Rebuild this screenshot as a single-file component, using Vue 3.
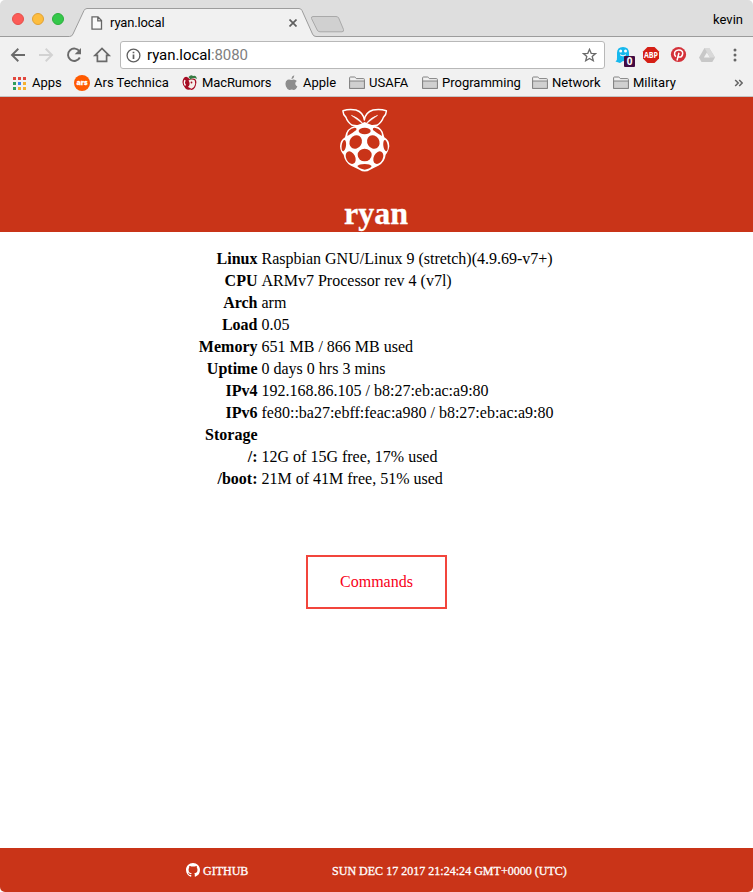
<script setup>
const stats = [
  { label: 'Linux', value: 'Raspbian GNU/Linux 9 (stretch)(4.9.69-v7+)' },
  { label: 'CPU', value: 'ARMv7 Processor rev 4 (v7l)' },
  { label: 'Arch', value: 'arm' },
  { label: 'Load', value: '0.05' },
  { label: 'Memory', value: '651 MB / 866 MB used' },
  { label: 'Uptime', value: '0 days 0 hrs 3 mins' },
  { label: 'IPv4', value: '192.168.86.105 / b8:27:eb:ac:a9:80' },
  { label: 'IPv6', value: 'fe80::ba27:ebff:feac:a980 / b8:27:eb:ac:a9:80' },
  { label: 'Storage', value: '' },
  { label: '/:', value: '12G of 15G free, 17% used' },
  { label: '/boot:', value: '21M of 41M free, 51% used' },
]
const folders = ['USAFA', 'Programming', 'Network', 'Military']
const appColors = ['#e2483d', '#e2483d', '#e2483d', '#2f9e5b', '#3b84ee', '#f5b02e', '#2f9e5b', '#f5b02e', '#f5b02e']
</script>

<template>
  <div class="window">
    <div class="titlebar">
      <svg class="tabs" width="753" height="37" viewBox="0 0 753 37">
        <path d="M0 36.5H69.5Q72 36.5 73 34L84 10.5Q85 8.5 87 8.5H299Q301 8.5 302 10.5L312.500 34Q313.500 36.500 316 36.500H753V38H0Z" fill="#f1f1f1" stroke="#9c9c9c" />
        <path d="M313 16.500H336Q338 16.500 338.700 18L343.500 29.500Q344 31.800 342 31.800H320Q318 31.800 317.200 30L311.500 18.500Q311 16.500 313 16.500Z" fill="#d0d0d0" stroke="#a9a9a9" />
      </svg>
      <div class="lights"><i class="close"></i><i class="min"></i><i class="max"></i></div>
      <svg class="page" width="12" height="14" viewBox="0 0 12 14"><path d="M1 .8H7L10.500 4.500V13.200H1Z M6.800 1V4.800H10.500" fill="#fafafa" stroke="#666" stroke-width="1.300" /></svg>
      <span class="tab-title">ryan.local</span>
      <svg class="x" width="8" height="8" viewBox="0 0 8 8"><path d="M.5.5L7.500 7.500M7.500.5L.5 7.500" stroke="#5f5f5f" stroke-width="1.700" /></svg>
      <span class="profile">kevin</span>
    </div>

    <div class="toolbar">
      <svg class="nav" width="112" height="36" viewBox="0 0 112 36" fill="none" stroke="#6a6a6a" stroke-width="1.900">
        <path d="M25 18H12.500M18.300 11.800L12 18L18.300 24.200" />
        <path d="M39 18H51.500M45.700 11.800L52 18L45.700 24.200" stroke="#d2d2d2" />
        <path d="M79.500 14.500A6.200 6.200 0 1 0 79.800 20.500" />
        <path d="M81 11V17.300H74.700Z" fill="#6a6a6a" stroke="none" />
        <path d="M95 18.300L102 11.500L109 18.300H106.600V24.300H97.400V18.300Z" stroke-width="1.700" />
      </svg>
      <div class="address">
        <svg class="info" width="15" height="15" viewBox="0 0 15 15"><circle cx="7.500" cy="7.500" r="6.400" fill="none" stroke="#5f5f5f" stroke-width="1.300" /><path d="M7.500 6.500V11M7.500 3.700V5.300" stroke="#5f5f5f" stroke-width="1.700" /></svg>
        <span class="url">ryan.local<em>:8080</em></span>
        <svg class="star" width="15" height="14" viewBox="0 0 15 14"><path d="M7.500 1.300L9.200 5.300L13.500 5.600L10.200 8.400L11.300 12.700L7.500 10.400L3.700 12.700L4.800 8.400L1.500 5.600L5.800 5.300Z" fill="none" stroke="#696969" stroke-width="1.300" /></svg>
      </div>
      <svg class="extensions" width="148" height="36" viewBox="605 37 148 36">
        <path d="M617 53Q617 47 623 47Q629 47 629 53V61L626 62L623 61L620 63L615.500 61.500Q617.500 60 617 57Z" fill="#15b8ee" />
        <circle cx="620.700" cy="51" r="1.500" fill="#fff" /><circle cx="625.500" cy="51" r="1.500" fill="#fff" />
        <path d="M620 54.800Q623 57 626 54.800" fill="none" stroke="#fff" />
        <rect x="624" y="56" width="11" height="11" rx="1" fill="#420b43" /><text x="629.500" y="65.300" class="badge" text-anchor="middle">0</text>
        <path d="M647.500 47H654.500L659 51.500V58.500L654.500 63H647.500L643 58.500V51.500Z" fill="#d51f15" />
        <text x="651" y="58" class="abp" text-anchor="middle" textLength="14" lengthAdjust="spacingAndGlyphs">ABP</text>
        <circle cx="678.500" cy="54.500" r="7.600" fill="#d4323a" />
        <path d="M675.800 56.700Q673.900 54.700 674.700 52.300Q675.900 49.800 679.100 50Q682.600 50.200 682.700 53.300Q682.300 57 679.700 57.100Q678.300 57 678.300 55.900M679 52.800L677 60.500" fill="none" stroke="#fff" stroke-width="1.500" />
        <path d="M704.500 48H709.200L715 57.500L712.300 62H701.500L699 57.500Z" fill="#c8c8c8" /><path d="M706.900 52.500L703.800 57.500H710Z" fill="#f1f1f1" /><path d="M709.200 48L715 57.500H710L704.500 48Z" fill="#d9d9d9" />
        <g fill="#666"><circle cx="735" cy="50" r="1.500" /><circle cx="735" cy="55" r="1.500" /><circle cx="735" cy="60" r="1.500" /></g>
      </svg>
    </div>

    <div class="bookmarks">
      <div class="bookmark">
        <span class="apps"><i v-for="(c, i) in appColors" :key="i" :style="{ background: c }"></i></span>
        <span>Apps</span>
      </div>
      <div class="bookmark"><svg width="16" height="16" viewBox="0 0 16 16"><circle cx="8" cy="8" r="8" fill="#ff5a00" /><text x="8" y="10.300" class="ars" text-anchor="middle" textLength="11" lengthAdjust="spacingAndGlyphs">ars</text></svg><span>Ars Technica</span></div>
      <div class="bookmark">
        <svg width="16" height="16" viewBox="0 0 16 16"><path d="M8 4.500Q4-.5 1.200 4Q-1 9 3.500 13.500Q5.500 15.500 8 14.500Q11 16 13 12.500Q15.500 7 13.500 4.500Q11 2.500 8 4.500Z" fill="#a70d24" /><path d="M6.500 5.500Q10 3.500 12.800 5.500Q14 9 12 12L9.500 13.800L6 12Q9 9 6.500 5.500Z" fill="#f5eee9" /><path d="M3 5Q1.500 8 3.500 10.500" fill="none" stroke="#fff" stroke-width="1.300" /><path d="M6.500 2Q9-1 11 1Q14-.5 15 4Q11.500 2 8.500 4.500Z" fill="#367b43" /><circle cx="9.500" cy="7.500" r=".9" fill="#a70d24" /></svg>
        <span class="mac">MacRumors</span>
      </div>
      <div class="bookmark apple">
        <svg width="13" height="16" viewBox="0 0 13 16" fill="#8d8d8d"><path d="M9.200 .3Q9.400 3.200 6.600 4.200Q6.100 1.500 9.200 .3ZM6.600 5Q9.500 3.600 11.900 6Q9.400 7.500 10.700 10Q11.100 10.900 12.400 11.400Q10.700 15.200 8.800 14.900Q6.800 13.900 4.600 14.900Q2.600 15.200 1 11.500Q-.6 6.200 2.600 4.700Q4.300 4.100 6.600 5Z" /></svg>
        <span>Apple</span>
      </div>
      <div v-for="name in folders" :key="name" class="bookmark">
        <svg width="16" height="14" viewBox="0 0 16 14"><path d="M.6 12.400V1.800Q.6 1 1.400 1H5.500Q6.300 1 6.700 1.800L7.300 2.600H14.500Q15.400 2.600 15.400 3.500V12.400Z" fill="#f1f1f1" stroke="#828282" /><path d="M.6 5H15.400V12.400H.6Z" fill="#d0d0d0" stroke="#828282" /></svg>
        <span>{{ name }}</span>
      </div>
      <svg class="more" width="9" height="8" viewBox="0 0 9 8"><path d="M1.200 1L4.200 4L1.200 7M5.200 1L8.200 4L5.200 7" fill="none" stroke="#666" stroke-width="1.600" /></svg>
    </div>

    <header>
      <svg class="logo" width="52" height="66" viewBox="59 34 156 198">
        <g fill="#c93418" stroke="#fff" stroke-width="4.500" stroke-linejoin="round">
          <path d="M135 83Q118 90 99 86Q84 76 80 62Q70 53 71 42Q90 36 110 40Q132 47 135 70Q138 47 161 40Q181 36 201 42Q202 53 192 62Q188 76 173 86Q154 90 135 83Z" />
        </g>
        <path d="M96 56Q117 62 134 84Q115 70 96 56ZM175 56Q154 62 137 84Q156 70 175 56Z" fill="#fff" stroke="#fff" stroke-width="1.500" />
        <path d="M110 87Q123 83 136 76Q150 83 162 87Q181 87 190 105L195 122Q211 131 210 149Q207 166 199 174Q197 196 177 207Q164 213 153 219Q136 230 120 219Q105 212 95 207Q76 196 73 174Q63 165 62 149Q62 131 77 122Q80 93 110 87Z" fill="#fff" />
        <g fill="#c93418">
          <path d="M84 118Q84 97 106 93Q113 93 111 100Q99 110 84 118ZM188 118Q188 97 166 93Q159 93 161 100Q173 110 188 118Z" />
          <ellipse cx="136" cy="103" rx="18" ry="10" />
          <ellipse cx="109" cy="136" rx="18" ry="21" transform="rotate(32 109 136)" />
          <ellipse cx="162" cy="136" rx="18" ry="21" transform="rotate(-32 162 136)" />
          <ellipse cx="73.500" cy="147" rx="6.500" ry="17" transform="rotate(8 73.500 147)" /><ellipse cx="198.500" cy="147" rx="6.500" ry="17" transform="rotate(-8 198.500 147)" />
          <ellipse cx="136" cy="175" rx="21" ry="19" />
          <ellipse cx="94" cy="183" rx="13.500" ry="20" transform="rotate(-27 94 183)" /><ellipse cx="177" cy="183" rx="13.500" ry="20" transform="rotate(27 177 183)" />
          <path d="M114 208Q119 202 136 202Q152 202 157 208Q154 216 136 219Q119 216 114 208Z" />
        </g>
      </svg>
      <h1>ryan</h1>
    </header>

    <main>
      <dl class="stats">
        <template v-for="s in stats" :key="s.label"><dt>{{ s.label }}</dt><dd>{{ s.value }}</dd></template>
      </dl>
      <button>Commands</button>
    </main>

    <footer>
      <svg width="14" height="14" viewBox="0 0 16 16" fill="#fff"><path d="M8 0C3.580 0 0 3.580 0 8c0 3.540 2.290 6.530 5.470 7.590.4.070.55-.17.55-.38 0-.19-.01-.82-.01-1.490-2.010.37-2.530-.49-2.690-.94-.09-.23-.48-.94-.82-1.130-.28-.15-.68-.52-.01-.53.63-.01 1.080.58 1.230.82.72 1.210 1.870.87 2.330.66.070-.52.28-.87.51-1.070-1.780-.2-3.640-.89-3.640-3.950 0-.87.31-1.590.82-2.150-.08-.2-.36-1.020.08-2.120 0 0 .67-.21 2.200.82.64-.18 1.320-.27 2-.27s1.360.09 2 .27c1.530-1.040 2.200-.82 2.200-.82.44 1.100.16 1.920.08 2.120.51.56.82 1.270.82 2.150 0 3.070-1.870 3.750-3.650 3.950.29.25.54.73.54 1.480 0 1.070-.01 1.930-.01 2.200 0 .21.15.46.55.38A8.010 8.010 0 0 0 16 8c0-4.420-3.580-8-8-8Z" /></svg>
      <span class="github">GITHUB</span>
      <span class="date">SUN DEC 17 2017 21:24:24 GMT+0000 (UTC)</span>
    </footer>
  </div>
</template>

<style>
body { background: #fff; }
</style>

<style scoped>
* { box-sizing: border-box; }
.window { width: 753px; height: 892px; display: flex; flex-direction: column; overflow: hidden; border-radius: 5px; background: #fff; font-family: "Liberation Serif", serif; }
.titlebar, .toolbar, .bookmarks { flex: none; display: flex; align-items: center; font: 13px/16px Roboto, sans-serif; color: #000; white-space: nowrap; }
.titlebar { position: relative; height: 37px; background: #dedede; padding: 2px 10px 0 12px; }
.titlebar > :not(.tabs) { position: relative; }
.titlebar > .tabs { position: absolute; left: 0; top: 0; }
.lights { display: flex; gap: 8px; margin-bottom: 1px; }
.lights i { width: 12px; height: 12px; border-radius: 50%; border: 1px solid; }
.lights .close { background: #fc5b57; border-color: #e4504b; }
.lights .min { background: #fdbd3e; border-color: #e0a135; }
.lights .max { background: #34c84a; border-color: #2cae3d; }
.page { margin: 7px 0 0 27px; height: 14px; }
.tab-title { width: 179px; margin: 7px 0 0 7px; letter-spacing: -.14px; }
.x { margin-top: 7px; }
.profile { margin: 1px 0 0 auto; }
.toolbar { height: 36px; background: #f1f1f1; }
.nav { flex: none; margin-right: 8px; }
.address { width: 485px; height: 28px; border: 1px solid #b8b8b8; border-radius: 3px; background: #fff; display: flex; align-items: center; padding: 0 7px 0 5px; }
.url { margin-left: 6px; font-size: 15px; line-height: 20px; letter-spacing: -.06px; }
.url em { color: #808080; font-style: normal; }
.star { margin-left: auto; }
.badge { font: bold 10px "Open Sans", sans-serif; fill: #fff; }
.abp { font: bold 8.5px "Open Sans", sans-serif; fill: #fff; }
.ars { font: 800 7.5px "Open Sans", sans-serif; fill: #fff; stroke: #fff; stroke-width: .3px; }
.bookmarks { height: 24px; background: #f1f1f1; border-bottom: 1px solid #c4c4c4; padding: 0 10px 3px 12px; display: grid; grid-template-columns: 62px 108px 102px 65px 73px 110px 81px 1fr 9px; }
.bookmark { display: flex; align-items: center; gap: 4px; }
.mac { letter-spacing: -.1px; }
.apple { padding-left: 1px; gap: 5px; }
.apps { width: 16px; padding-left: 1px; display: grid; grid-template-columns: repeat(3, 3px); gap: 2px; }
.apps i { height: 3px; }
header { flex: none; height: 135px; background: #c93418; display: flex; flex-direction: column; align-items: center; padding-top: 11px; }
.logo { flex: none; margin-right: 24px; }
h1 { margin: 21px 1px 0 0; font-size: 32px; line-height: 36px; color: #fff; -webkit-text-stroke: .3px #fff; }
main { flex: 1; display: flex; flex-direction: column; align-items: flex-start; }
.stats { margin: 16px 0 65px; display: grid; grid-template-columns: 257.5px auto; column-gap: 4px; grid-auto-rows: 22px; font-size: 16px; line-height: 22px; white-space: nowrap; }
dt { font-weight: bold; text-align: right; }
dd { margin: 0; }
button { width: 141px; height: 54px; margin-left: 306px; padding: 0; border: 2px solid #f2453c; background: #fff; color: #f80018; font: 16px "Liberation Serif", serif; }
footer { flex: none; height: 44px; background: #c93418; color: #fff; display: flex; align-items: center; padding-left: 186px; font-size: 12px; -webkit-text-stroke: .3px #fff; white-space: nowrap; }
footer span { margin-top: 2px; }
.github { width: 129px; margin-left: 3px; }
.date { letter-spacing: .02px; }
</style>
